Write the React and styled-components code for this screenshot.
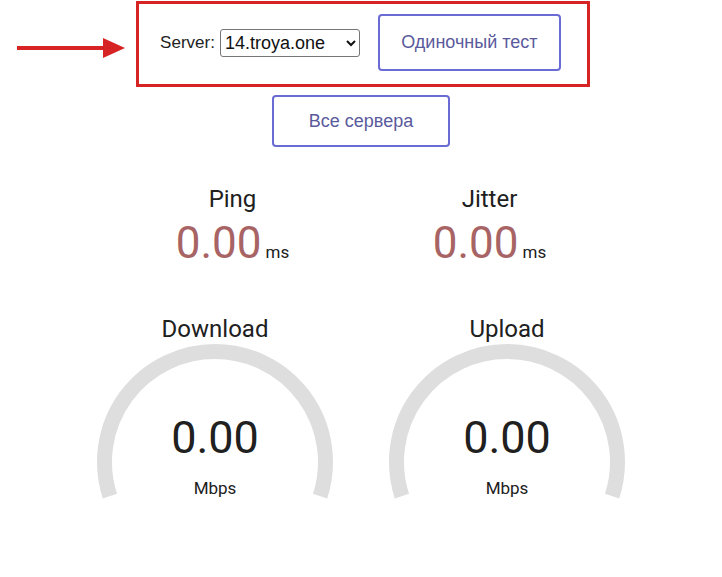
import React from 'react';
import styled, { createGlobalStyle } from 'styled-components';

const GlobalStyle = createGlobalStyle`
  body {
    margin: 0;
    background: #fff;
    font-family: "Liberation Sans", Arial, sans-serif;
    color: #202020;
  }
`;

const Page = styled.div`
  display: flex;
  flex-direction: column;
  align-items: center;
  padding-top: 1px;
`;

const Highlight = styled.div`
  position: relative;
  display: flex;
  align-items: center;
  border: 3px solid #d62424;
  padding: 10px 26px 13px 21px;
  margin-left: 4px;
`;

const Arrow = styled.svg`
  position: absolute;
  right: calc(100% + 14px);
  top: 33px;
`;

const Label = styled.label`
  font-size: 17px;
  color: #222;
  margin-right: 5px;
`;

const ServerSelect = styled.select`
  font-family: "Liberation Sans", Arial, sans-serif;
  font-size: 18px;
  width: 140px;
  height: 28px;
  color: #111;
  border: 1px solid #767676;
  border-radius: 3px;
  background: #fff;
  margin-right: 18px;
`;

const Button = styled.button`
  font-family: "Liberation Sans", Arial, sans-serif;
  font-size: 18px;
  color: #5a5a9c;
  background: #fff;
  border: 2px solid #6b6bd6;
  border-radius: 4px;
  width: ${p => p.$w}px;
  height: ${p => p.$h}px;
  margin-top: ${p => p.$mt || 0}px;
  cursor: pointer;
`;

const Row = styled.div`
  display: grid;
  grid-template-columns: repeat(2, ${p => p.$col}px);
  margin-top: ${p => p.$mt}px;
`;

const Cell = styled.div`
  display: flex;
  flex-direction: column;
  align-items: center;
  font-family: Roboto, "Liberation Sans", sans-serif;
`;

const TestName = styled.div`
  font-size: 24px;
  line-height: 28px;
  color: #202020;
`;

const SmallValue = styled.div`
  display: flex;
  align-items: baseline;
  margin-top: 5px;
  line-height: 50px;
`;

const Number = styled.span`
  font-size: ${p => p.$size}px;
  line-height: ${p => p.$lh || 50}px;
  color: ${p => p.$color};
`;

const Unit = styled.span`
  font-size: 17px;
  color: #202020;
  margin-left: 4px;
`;

const Gauge = styled.div`
  display: grid;
  width: 292px;
  height: 165px;
  & > * {
    grid-area: 1 / 1;
  }
`;

const GaugeText = styled.div`
  display: flex;
  flex-direction: column;
  align-items: center;
  padding-top: 69px;
`;

const GaugeUnit = styled.div`
  font-size: 17px;
  line-height: 20px;
  margin-top: 14px;
  color: #202020;
`;

const Meter = () => (
  <svg width="292" height="165" viewBox="0 0 292 165">
    <path
      d="M 40.9 153.1 A 110.5 110.5 0 1 1 251.1 153.1"
      fill="none"
      stroke="#dedede"
      strokeWidth="15"
    />
  </svg>
);

const Small = ({ name, value }) => (
  <Cell>
    <TestName>{name}</TestName>
    <SmallValue>
      <Number $size={44} $color="#a86464">{value}</Number>
      <Unit>ms</Unit>
    </SmallValue>
  </Cell>
);

const Big = ({ name, value }) => (
  <Cell>
    <TestName>{name}</TestName>
    <Gauge>
      <Meter />
      <GaugeText>
        <Number $size={45} $lh={52} $color="#202020">{value}</Number>
        <GaugeUnit>Mbps</GaugeUnit>
      </GaugeText>
    </Gauge>
  </Cell>
);

const App = () => {
  return (
    <Page>
      <GlobalStyle />
      <Highlight>
        <Arrow width="108" height="22" viewBox="0 0 108 22">
          <line x1="0" y1="11" x2="90" y2="11" stroke="#d62424" strokeWidth="4" />
          <polygon points="86,1 108,11 86,21" fill="#d62424" />
        </Arrow>
        <Label>Server:</Label>
        <ServerSelect defaultValue="14">
          <option value="14">14.troya.one</option>
        </ServerSelect>
        <Button $w={183} $h={57}>Одиночный тест</Button>
      </Highlight>
      <Button $w={178} $h={52} $mt={8}>Все сервера</Button>
      <Row $col={257} $mt={38}>
        <Small name="Ping" value="0.00" />
        <Small name="Jitter" value="0.00" />
      </Row>
      <Row $col={292} $mt={38}>
        <Big name="Download" value="0.00" />
        <Big name="Upload" value="0.00" />
      </Row>
    </Page>
  );
};

export default App;
